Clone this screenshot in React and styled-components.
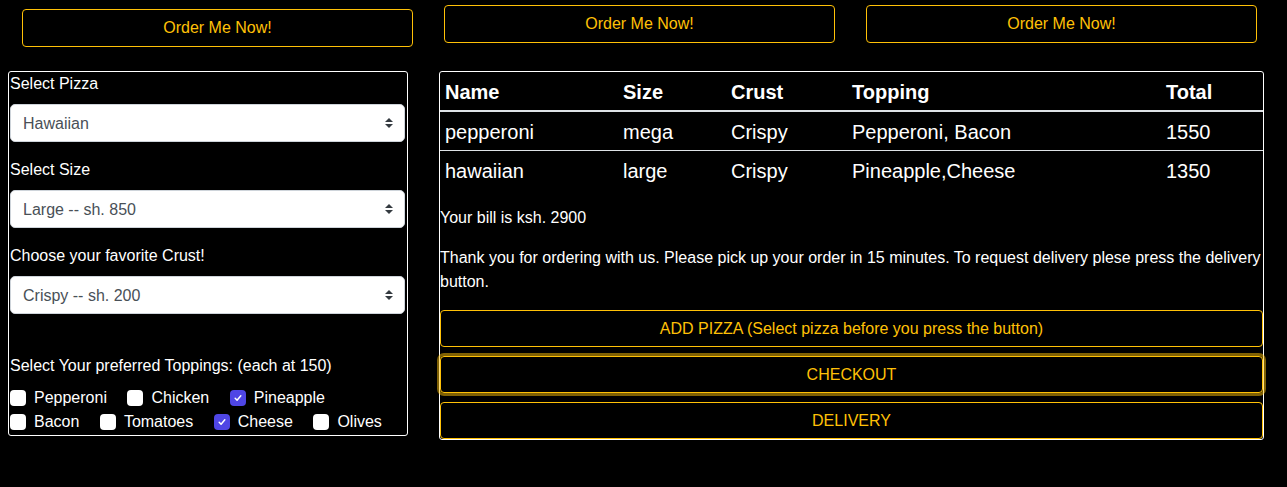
import React from "react";
import styled, { createGlobalStyle } from "styled-components";

const Global = createGlobalStyle`
  html, body { margin: 0; padding: 0; background: #000; }
  body {
    font-family: "Liberation Sans", Arial, sans-serif;
    font-size: 16px;
    line-height: 24px;
    color: #fff;
  }
  * { box-sizing: border-box; }
`;

const Page = styled.div`
  width: 1287px;
  min-height: 487px;
  background: #000;
`;

const TopRow = styled.div`
  display: flex;
  gap: 31px;
  padding: 5px 0 0 22px;
  height: 47px;
  align-items: flex-start;
`;

const OutlineButton = styled.button`
  display: block;
  width: ${(p) => p.$width || "100%"};
  height: ${(p) => p.$height || 38}px;
  margin-top: ${(p) => p.$top || 0}px;
  background: transparent;
  border: 1px solid #ffc107;
  border-radius: 4px;
  color: #ffc107;
  font-family: inherit;
  font-size: 16px;
  line-height: 24px;
  padding: 0;
  text-align: center;
  cursor: pointer;
  box-shadow: ${(p) => (p.$focus ? "0 0 0 3px rgba(255, 193, 7, 0.5)" : "none")};
`;

const MainRow = styled.div`
  display: flex;
  align-items: flex-start;
  margin-top: 24px;
  padding-left: 8px;
`;

const FormPanel = styled.div`
  width: 400px;
  border: 1px solid #fff;
  border-radius: 3px;
  padding: 0 2px 1px 1px;
  display: flex;
  flex-direction: column;
`;

const Label = styled.div`
  font-size: 16px;
  line-height: 24px;
  color: #fff;
  margin-bottom: ${(p) => p.$mb ?? 8}px;
  margin-top: ${(p) => p.$mt ?? 0}px;
`;

const SelectWrap = styled.div`
  position: relative;
  margin-bottom: 16px;
`;

const Select = styled.select`
  appearance: none;
  -webkit-appearance: none;
  width: 100%;
  height: 38px;
  background: #fff;
  border: 1px solid #ced4da;
  border-radius: 5px;
  padding: 0 30px 0 12px;
  font-family: "Liberation Sans", Arial, sans-serif;
  font-size: 16px;
  color: #495057;
  outline: none;
`;

const Arrow = styled.svg`
  position: absolute;
  right: 12px;
  top: 14px;
  width: 8px;
  height: 10px;
  pointer-events: none;
`;

const CheckRow = styled.div`
  display: flex;
  align-items: center;
  height: 24px;
`;

const CheckItem = styled.label`
  display: flex;
  align-items: center;
  gap: 8px;
  margin-right: 20.5px;
  font-size: 16px;
  line-height: 24px;
  color: #fff;
`;

const Box = styled.span`
  position: relative;
  width: 16px;
  height: 16px;
  border-radius: 4px;
  background: ${(p) => (p.$checked ? "#4f46e5" : "#fff")};
  display: inline-flex;
  align-items: center;
  justify-content: center;
  flex: none;
`;

const RightPanel = styled.div`
  width: 825px;
  margin-left: 31px;
  border: 1px solid #fff;
  border-radius: 3px;
  display: flex;
  flex-direction: column;
`;

const Table = styled.table`
  width: 100%;
  border-collapse: collapse;
  margin-bottom: 17px;
  font-size: 20px;
  line-height: 24px;
  color: #fff;
`;

const Th = styled.th`
  text-align: left;
  font-weight: bold;
  padding: 8px 5px 6px;
  width: ${(p) => p.$w}px;
  border-bottom: 2px solid #dee2e6;
`;

const Td = styled.td`
  padding: 8px 5px 6px;
  border-bottom: ${(p) => (p.$last ? "none" : "1px solid #dee2e6")};
`;

const Para = styled.p`
  margin: 0 0 16px 0;
  font-size: 16px;
  line-height: 24px;
  color: #fff;
`;

const ActionStack = styled.div`
  display: flex;
  flex-direction: column;
  gap: 9px;
`;

const rows = [
  { name: "pepperoni", size: "mega", crust: "Crispy", topping: "Pepperoni, Bacon", total: "1550" },
  { name: "hawaiian", size: "large", crust: "Crispy", topping: "Pineapple,Cheese", total: "1350" },
];

function SelectField({ value }) {
  return (
    <SelectWrap>
      <Select defaultValue={value}>
        <option>{value}</option>
      </Select>
      <Arrow viewBox="0 0 4 5">
        <path fill="#343a40" d="M2 0L0 2h4zm0 5L0 3h4z" />
      </Arrow>
    </SelectWrap>
  );
}

function Check({ label, checked }) {
  return (
    <CheckItem>
      <Box $checked={checked}>
        {checked && (
          <svg width="10" height="10" viewBox="0 0 16 16">
            <path d="M3.5 8.5l3 3 6-7" fill="none" stroke="#fff" strokeWidth="2.4" strokeLinecap="round" strokeLinejoin="round" />
          </svg>
        )}
      </Box>
      {label}
    </CheckItem>
  );
}

export default function App() {
  return (
    <Page>
      <Global />
      <TopRow>
        <OutlineButton $width="391px" $top={4}>Order Me Now!</OutlineButton>
        <OutlineButton $width="391px">Order Me Now!</OutlineButton>
        <OutlineButton $width="391px">Order Me Now!</OutlineButton>
      </TopRow>
      <MainRow>
        <FormPanel>
          <Label>Select Pizza</Label>
          <SelectField value="Hawaiian" />
          <Label>Select Size</Label>
          <SelectField value="Large -- sh. 850" />
          <Label>Choose your favorite Crust!</Label>
          <SelectField value="Crispy -- sh. 200" />
          <Label $mt={24}>Select Your preferred Toppings: (each at 150)</Label>
          <CheckRow>
            <Check label="Pepperoni" />
            <Check label="Chicken" />
            <Check label="Pineapple" checked />
          </CheckRow>
          <CheckRow>
            <Check label="Bacon" />
            <Check label="Tomatoes" />
            <Check label="Cheese" checked />
            <Check label="Olives" />
          </CheckRow>
        </FormPanel>
        <RightPanel>
          <Table>
            <thead>
              <tr>
                <Th $w={178}>Name</Th>
                <Th $w={108}>Size</Th>
                <Th $w={121}>Crust</Th>
                <Th $w={314}>Topping</Th>
                <Th>Total</Th>
              </tr>
            </thead>
            <tbody>
              {rows.map((r, i) => (
                <tr key={r.name}>
                  <Td $last={i === rows.length - 1}>{r.name}</Td>
                  <Td $last={i === rows.length - 1}>{r.size}</Td>
                  <Td $last={i === rows.length - 1}>{r.crust}</Td>
                  <Td $last={i === rows.length - 1}>{r.topping}</Td>
                  <Td $last={i === rows.length - 1}>{r.total}</Td>
                </tr>
              ))}
            </tbody>
          </Table>
          <Para>Your bill is ksh. 2900</Para>
          <Para>
            Thank you for ordering with us. Please pick up your order in 15 minutes. To request delivery plese press the delivery button.
          </Para>
          <ActionStack>
            <OutlineButton $height={37}>ADD PIZZA (Select pizza before you press the button)</OutlineButton>
            <OutlineButton $height={37} $focus>CHECKOUT</OutlineButton>
            <OutlineButton $height={37}>DELIVERY</OutlineButton>
          </ActionStack>
        </RightPanel>
      </MainRow>
    </Page>
  );
}
